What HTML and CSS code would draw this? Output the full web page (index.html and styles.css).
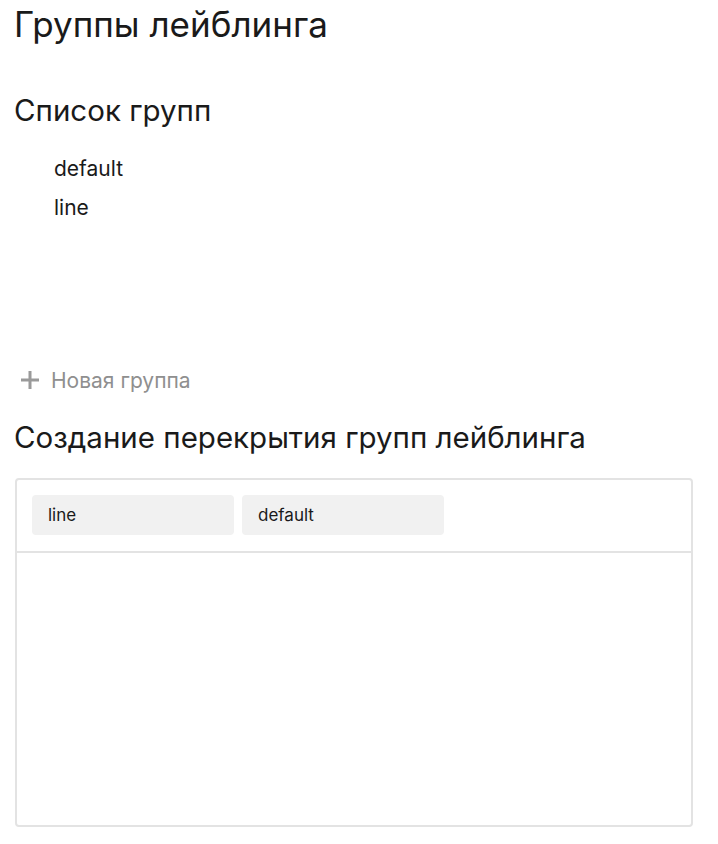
FILE: index.html
```html
<!DOCTYPE html>
<html lang="ru">

<head>
  <meta charset="UTF-8">
  <title>Группы лейблинга</title>
  <link rel="stylesheet" href="styles.css">
</head>

<body>
  <div class="page">
    <h1 class="title">Группы лейблинга</h1>

    <h2 class="sub">Список групп</h2>
    <ul class="groups">
      <li>default</li>
      <li>line</li>
    </ul>

    <button class="btn-add">
      <svg width="20" height="20" viewBox="0 0 20 20">
        <path d="M10 1v18M1 10h18" stroke="#9a9a9a" stroke-width="3" fill="none" />
      </svg>
      Новая группа
    </button>

    <h2 class="sub sub-over">Создание перекрытия групп лейблинга</h2>
    <div class="over">
      <div class="over-head">
        <div class="chip">line</div>
        <div class="chip">default</div>
      </div>
      <div class="over-body"></div>
    </div>
  </div>
</body>

</html>
```

FILE: styles.css
```css
body,
h1,
h2,
ul {
  margin: 0;
  padding: 0;
}

body {
  font-family: Inter, "Liberation Sans", Arial, sans-serif;
  color: #1a1a1a;
  background: #fff;
}

.page {
  padding: 0 25px 0 14px;
}

.title {
  font-size: 35px;
  font-weight: 400;
  line-height: 48px;
}

.sub {
  font-size: 29.5px;
  font-weight: 400;
  line-height: 40px;
  margin-top: 42px;
}

.groups {
  list-style: none;
  padding-left: 40px;
  margin-top: 19px;
  height: 216px;
}

.groups li {
  font-size: 21px;
  line-height: 39px;
}

.btn-add {
  display: flex;
  align-items: center;
  gap: 11px;
  border: none;
  background: none;
  padding: 0 0 0 6px;
  font-family: inherit;
  font-size: 21px;
  color: #8f8f8f;
  height: 30px;
}

.sub-over {
  margin-top: 22px;
}

.over {
  margin: 21px 0 0 1px;
  border: 2px solid #e3e3e3;
  border-radius: 4px;
  height: 345px;
  display: flex;
  flex-direction: column;
}

.over-head {
  display: flex;
  gap: 8px;
  padding: 15px 15px 16px;
  border-bottom: 2px solid #e3e3e3;
}

.chip {
  width: 186px;
  height: 40px;
  line-height: 40px;
  padding-left: 16px;
  background: #f1f1f1;
  border-radius: 4px;
  font-size: 17px;
}

.over-body {
  flex: 1;
}
```
